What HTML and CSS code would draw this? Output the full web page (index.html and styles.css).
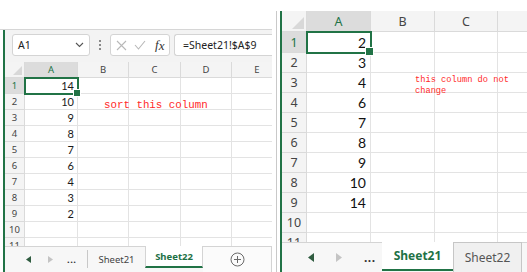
FILE: index.html
```html
<!DOCTYPE html>
<html lang="en">
<head>
    <meta charset="UTF-8">
    <meta name="viewport" content="width=device-width, initial-scale=1.0">
    <title>Sort a column</title>
    <link rel="stylesheet" href="styles.css">
</head>
<body>
    <div class="shots">
        <!-- Before: Sheet22 with formulas pointing at Sheet21 -->
        <div class="shot shot-left">
            <div class="shot-top"></div>
            <div class="book book-left">
                <div class="formula-bar">
                    <div class="name-box">
                        <span>A1</span>
                        <svg width="9" height="6" viewBox="0 0 9 6"><path d="M1 1l3.5 3.5L8 1" fill="none" stroke="#555" stroke-width="1.1"/></svg>
                    </div>
                    <div class="vdots"><i></i><i></i><i></i></div>
                    <div class="fx-box">
                        <svg width="11" height="11" viewBox="0 0 11 11"><path d="M1 1l9 9M10 1l-9 9" stroke="#b8b8b8" stroke-width="1.1"/></svg>
                        <svg width="12" height="10" viewBox="0 0 12 10"><path d="M1 5l3.5 4L11 1" fill="none" stroke="#b8b8b8" stroke-width="1.1"/></svg>
                        <span class="fx">f<span>x</span></span>
                    </div>
                    <div class="formula-input">=Sheet21!$A$9</div>
                </div>
                <div class="sheet sheet-small" id="sheet-left"></div>
                <div class="tabs tabs-small">
                    <div class="tab-nav">
                        <svg class="nav" width="5" height="7" viewBox="0 0 5 7"><path d="M5 0v7L0 3.5z" fill="#2f5c40"/></svg>
                        <svg class="nav" width="5" height="7" viewBox="0 0 5 7"><path d="M0 0v7l5-3.5z" fill="#c4c4c4"/></svg>
                        <span class="more">...</span>
                    </div>
                    <div class="tab-sep"></div>
                    <div class="tab">Sheet21</div>
                    <div class="tab active">Sheet22</div>
                    <div class="tab-add">
                        <svg width="15" height="15" viewBox="0 0 15 15"><circle cx="7.5" cy="7.5" r="6.5" fill="none" stroke="#6a6a6a"/><path d="M7.5 4v7M4 7.5h7" stroke="#6a6a6a"/></svg>
                    </div>
                </div>
            </div>
            <div class="note note-left">sort this column</div>
        </div>

        <!-- After: Sheet21 stays as it was -->
        <div class="shot shot-right">
            <div class="book book-right">
                <div class="book-inner">
                    <div class="sheet sheet-big" id="sheet-right"></div>
                    <div class="tabs tabs-big">
                        <div class="tab-nav">
                            <svg class="nav" width="6" height="9" viewBox="0 0 6 9"><path d="M6 0v9L0 4.5z" fill="#2f5c40"/></svg>
                            <svg class="nav" width="6" height="9" viewBox="0 0 6 9"><path d="M0 0v9l6-4.5z" fill="#c4c4c4"/></svg>
                            <span class="more">...</span>
                        </div>
                        <div class="tab active">Sheet21</div>
                        <div class="tab raised">Sheet22</div>
                        <div></div>
                    </div>
                </div>
            </div>
            <div class="note note-right">this column do not<br>change</div>
        </div>
    </div>

    <script>
        function makeCell(className, text) {
            const div = document.createElement('div');
            div.className = className;
            div.textContent = text;
            return div;
        }

        // Build a grid: header row, then rows with values in column A
        function buildSheet(id, headers, rowCount, values) {
            const sheet = document.getElementById(id);
            sheet.appendChild(makeCell('corner', ''));
            headers.forEach((label, c) => {
                sheet.appendChild(makeCell('col-head' + (c === 0 ? ' active' : ''), label));
            });
            for (let r = 1; r <= rowCount; r++) {
                sheet.appendChild(makeCell('row-head' + (r === 1 ? ' active' : ''), r));
                for (let c = 0; c < headers.length; c++) {
                    const value = c === 0 && values[r - 1] !== undefined ? values[r - 1] : '';
                    const selected = r === 1 && c === 0 ? ' selected' : '';
                    sheet.appendChild(makeCell('cell' + selected, value));
                }
            }
        }

        // The last column of the right sheet is cut off before its letter shows
        buildSheet('sheet-left', ['A', 'B', 'C', 'D', 'E'], 11, [14, 10, 9, 8, 7, 6, 4, 3, 2]);
        buildSheet('sheet-right', ['A', 'B', 'C', ''], 11, [2, 3, 4, 6, 7, 8, 9, 10, 14]);
    </script>
</body>
</html>
```

FILE: styles.css
```css
* {
    box-sizing: border-box;
}

body {
    margin: 0;
    background-color: #fff;
    font-family: 'Noto Sans', 'Open Sans', sans-serif;
    color: #333;
}

.shots {
    display: flex;
    width: 527px;
    height: 272px;
    overflow: hidden;
}

.shot {
    position: relative;
    height: 272px;
}

.shot-left {
    width: 276px;
    flex: none;
}

.shot-right {
    flex: 1;
    min-width: 0;
    padding-top: 11px;
}

.shot-top {
    width: 272px;
    height: 30px;
    border-bottom: 1px solid #d6d6d6;
}

/* Workbook frame */
.book-left {
    width: 269px;
    margin-left: 3px;
    border-left: 2px solid #217346;
}

.book-right {
    height: 261px;
    border-left: 1px solid #c9c9c9;
    padding-left: 3px;
}

.book-inner {
    height: 100%;
    border-left: 2px solid #217346;
}

/* Formula bar */
.formula-bar {
    display: flex;
    align-items: flex-start;
    height: 32px;
    padding: 4px 0 0 7px;
    background-color: #f3f3f3;
    font-size: 10.5px;
}

.name-box,
.fx-box,
.formula-input {
    height: 22px;
    background-color: #fff;
    border: 1px solid #d4d4d4;
    border-radius: 3px;
    display: flex;
    align-items: center;
}

.name-box {
    width: 78px;
    padding: 0 5px 0 5px;
    justify-content: space-between;
    color: #222;
}

.vdots {
    width: 20px;
    height: 22px;
    display: flex;
    flex-direction: column;
    align-items: center;
    justify-content: center;
    gap: 2px;
}

.vdots i {
    width: 2px;
    height: 2px;
    background-color: #8a8a8a;
}

.fx-box {
    width: 60px;
    margin-right: 4px;
    padding-left: 5px;
    gap: 7px;
}

.fx {
    font-family: 'Liberation Serif', serif;
    font-style: italic;
    font-size: 13px;
    color: #333;
    margin-left: 2px;
}

.fx span {
    position: relative;
    top: 1px;
}

.formula-input {
    flex: 1;
    padding-left: 8px;
    border-right: none;
    border-radius: 3px 0 0 3px;
    color: #222;
}

/* Grids: the last column runs past the edge and is cut off */
.sheet {
    display: grid;
    overflow: hidden;
}

.sheet-small {
    grid-template-columns: 20px 53px 51px 52px 51px 51px;
    grid-auto-rows: 16px;
    height: 184px;
    font-size: 9.5px;
}

.sheet-big {
    grid-template-columns: 25px 64px 64px 63px 64px;
    grid-template-rows: 21px 21px;
    grid-auto-rows: 20px;
    height: 231px;
    font-size: 12.5px;
}

.corner,
.col-head,
.row-head {
    background-color: #f4f4f4;
    color: #444;
    border-right: 1px solid #dadada;
    border-bottom: 1px solid #dadada;
    display: flex;
    align-items: center;
    justify-content: center;
}

.col-head.active,
.row-head.active {
    background-color: #dcdcdc;
    color: #217346;
}

.corner {
    position: relative;
}

.corner::after {
    content: '';
    position: absolute;
    right: 2px;
    bottom: 2px;
    width: 9px;
    height: 9px;
    background-color: #d8d8d8;
    clip-path: polygon(100% 0, 100% 100%, 0 100%);
}

.sheet-big .corner::after {
    width: 12px;
    height: 12px;
}

.cell {
    border-right: 1px solid #e3e3e3;
    border-bottom: 1px solid #e3e3e3;
    font-family: 'Lato', 'Noto Sans', sans-serif;
    color: #1a1a1a;
    display: flex;
    align-items: center;
    justify-content: flex-end;
    padding-right: 3px;
}

.sheet-small .cell {
    font-size: 11px;
}

.sheet-big .cell {
    font-size: 14px;
    padding-right: 4px;
    color: #111;
}

.cell.selected {
    position: relative;
    z-index: 1;
    outline: 2px solid #217346;
    outline-offset: -1px;
}

.cell.selected::after {
    content: '';
    position: absolute;
    right: -4px;
    bottom: -4px;
    width: 6px;
    height: 6px;
    background-color: #217346;
    border: 1px solid #fff;
}

.sheet-big .cell.selected::after {
    width: 7px;
    height: 7px;
}

/* Sheet tabs */
.tabs {
    display: grid;
    align-items: stretch;
    background-color: #f7f7f7;
    border-top: 1px solid #d4d4d4;
    color: #444;
}

.tabs-small {
    grid-template-columns: 82px 1px 57px 58px 1fr;
    height: 26px;
    font-size: 9.5px;
}

.tabs-big {
    grid-template-columns: 100px 71px 69px 1fr;
    height: 30px;
    font-size: 12px;
}

.tab-nav {
    display: flex;
    align-items: center;
}

.tabs-small .tab-nav {
    padding-left: 21px;
    gap: 17px;
}

.tabs-big .tab-nav {
    padding-left: 26px;
    gap: 22px;
}

.more {
    color: #333;
    font-weight: bold;
    letter-spacing: 0.5px;
}

.tabs-small .more {
    margin-left: -3px;
}

.tab-sep {
    margin: 3px 0 4px;
    background-color: #c8c8c8;
}

.tab {
    display: flex;
    align-items: center;
    justify-content: center;
}

.tab.active {
    background-color: #fff;
    margin-top: -1px;
    color: #1e7145;
    font-weight: bold;
    border-bottom: 2px solid #217346;
}

.tabs-small .tab.active {
    border-left: 1px solid #d4d4d4;
    border-right: 1px solid #d4d4d4;
    margin-bottom: 4px;
}

.tabs-big .tab.active {
    margin-bottom: 1px;
}

.tab.raised {
    background-color: #f0f0f0;
    border: 1px solid #c6c6c6;
    border-bottom: none;
    margin-top: -1px;
    color: #555;
}

.tab-add {
    display: flex;
    align-items: center;
    justify-content: center;
    background-color: #fbfbfb;
    border-right: 1px solid #d4d4d4;
}

/* Red text boxes lying over the grid */
.note {
    position: absolute;
    font-family: 'Liberation Mono', monospace;
    color: #ff2a2a;
    white-space: nowrap;
}

.note-left {
    left: 104px;
    top: 99px;
    font-size: 10.8px;
    line-height: 13px;
}

.note-right {
    left: 139px;
    top: 75px;
    font-size: 8.7px;
    line-height: 11px;
}
```
